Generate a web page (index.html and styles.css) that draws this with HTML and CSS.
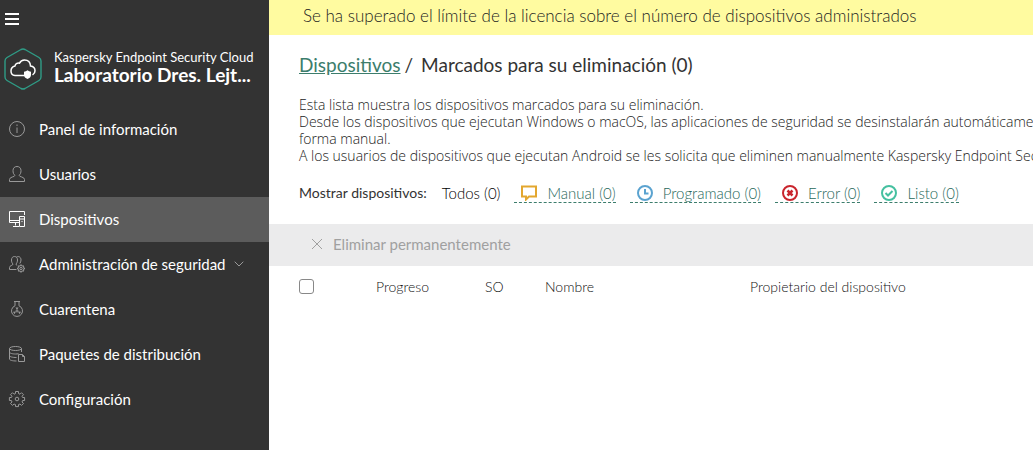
FILE: index.html
```html
<!doctype html>
<html lang="es">
<head>
    <meta charset="utf-8">
    <title>Dispositivos</title>
    <link rel="stylesheet" href="styles.css">
</head>
<body>

<div class="layout">
    <aside class="sidebar">
        <button class="toggle" type="button" aria-label="Menú">
            <svg width="14" height="12" viewBox="0 0 14 12"><path d="M0 1h14M0 6h14M0 11h14" stroke="#fff" stroke-width="2"/></svg>
        </button>

        <div class="brand">
            <svg width="38" height="42" viewBox="0 0 38 42" fill="none">
                <path d="M17 1.500q2-1 4 0l14 8q2 1.200 2 3.500v16q0 2.300-2 3.500l-14 8q-2 1-4 0l-14-8q-2-1.200-2-3.500V13q0-2.300 2-3.500z" stroke="#2f9c86" stroke-width="1.400"/>
                <path d="M21.500 27.500H11a4.500 4.500 0 0 1-4-4.500c0-3 1.800-4.500 4-5 .3-2 2-3.200 4.500-2.800 1-2.200 2.800-3.200 5-3.200 3.500 0 5.800 2.500 6 6 2.500.3 4.500 2 4.500 4.700 0 1.800-.8 3-2 3.800" stroke="#fff" stroke-width="1.500" stroke-linecap="round"/>
                <path d="M20 23.800q2-.3 3.500-1.600 1.500 1.300 3.500 1.600v3.200c0 2-1.500 3.200-3.500 4-2-.8-3.500-2-3.500-4z" fill="#fff"/>
            </svg>
            <div class="brand-text">
                <div class="product">Kaspersky Endpoint Security Cloud</div>
                <div class="company">Laboratorio Dres. Lejt...</div>
            </div>
        </div>

        <nav class="menu">
            <a href="#">
                <svg class="icon" viewBox="0 0 18 18"><circle cx="9" cy="9" r="7.500"/><path d="M9 7.500V13M9 4.500v1.500"/></svg>
                Panel de información
            </a>
            <a href="#">
                <svg class="icon" viewBox="0 0 18 18"><path d="M7 10.500C5.500 9.500 5 7.500 5 5.500c0-2.500 1.700-4 4-4s4 1.500 4 4c0 2-.5 4-2 5 0 1.500 5.500 1.200 5.500 4v2h-15v-2c0-2.800 5.500-2.500 5.500-4z"/></svg>
                Usuarios
            </a>
            <a class="active" href="#">
                <svg class="icon" viewBox="0 0 18 18"><path d="M16.500 5V1.500h-15v11H11M1.500 10.500H11M7.500 12.500v3M5 16.500h6M11.500 6.500h5v10h-5zM11.500 9h5M14 11v1"/></svg>
                Dispositivos
            </a>
            <a href="#">
                <svg class="icon" viewBox="0 0 18 18"><path d="M8.500 14.500h-7v-2c0-2.200 3.500-1.800 3.500-3.500C3.800 8 3.500 6.500 3.500 5c0-2 1-3.500 3-3.500S9.500 3 9.500 5c0 1.500-.5 3-1.500 4 0 .8.500 1.200 1.200 1.500M8.500 2c2.500-1.200 4.500.3 4.500 3 0 1.500-.5 2.500-1.200 3.500"/><circle cx="13" cy="13.500" r="1.200"/><circle cx="13" cy="13.500" r="3"/><path d="M13 9.500v1M13 16.500v1M9 13.500h1M16 13.500h1M10.200 10.700l.7.700M15.100 15.600l.7.700M15.800 10.700l-.7.700M10.900 15.600l-.7.700" stroke-width="1.500"/></svg>
                Administración de seguridad
                <svg class="chevron" width="10" height="6" viewBox="0 0 10 6"><path d="M.7.700L5 5 9.300.700"/></svg>
            </a>
            <a href="#">
                <svg class="icon" viewBox="0 0 18 18"><path d="M6 1.500h6M7 1.500v4.300a5.500 5.500 0 1 0 4 0V1.500"/><circle cx="9" cy="11" r="1"/><path d="M9 10L7.500 7.500h3zM8 11.500l-3 .3 1.500 2.500zM10 11.500l3 .3-1.500 2.500z" fill="#999" stroke="none"/></svg>
                Cuarentena
            </a>
            <a href="#">
                <svg class="icon" viewBox="0 0 18 18"><ellipse cx="7.500" cy="3.500" rx="6" ry="2"/><path d="M1.500 3.500V14c0 1.200 3 2 7 2M13.500 3.500V7M1.500 7c0 1.300 3 2 6 2 1 0 2 0 3-.3M1.500 10.500c0 1.300 3 2 7 2M10.500 9.500h4l2 2v5h-6zM14.500 9.500v2h2"/></svg>
                Paquetes de distribución
            </a>
            <a href="#">
                <svg class="icon" viewBox="0 0 18 18"><circle cx="9" cy="9" r="1.800"/><path d="M7.500 1.500h3v2l1.500.7 1.500-1.500 2 2L14 6.200l.6 1.300h2v3h-2L14 12l1.500 1.400-2 2L12 14l-1.500.6v2h-3v-2L6 14l-1.500 1.400-2-2L4 12l-.6-1.500h-2v-3h2L4 6.200 2.500 4.700l2-2L6 4.200l1.500-.7z"/></svg>
                Configuración
            </a>
        </nav>
    </aside>

    <main class="main">
        <div class="notice">Se ha superado el límite de la licencia sobre el número de dispositivos administrados</div>

        <div class="intro">
            <h1 class="title"><a href="#">Dispositivos</a><span class="slash">/</span>Marcados para su eliminación (0)</h1>

            <p class="description">
                Esta lista muestra los dispositivos marcados para su eliminación.<br>
                Desde los dispositivos que ejecutan Windows o macOS, las aplicaciones de seguridad se desinstalarán automáticamente<br>
                forma manual.<br>
                A los usuarios de dispositivos que ejecutan Android se les solicita que eliminen manualmente Kaspersky Endpoint Security
            </p>

            <div class="filters">
                <span class="filters-label">Mostrar dispositivos:</span>
                <span class="current">Todos (0)</span>
                <a class="filter" href="#">
                    <svg width="16" height="16" viewBox="0 0 16 16" fill="none" stroke="#e3a72f" stroke-width="2"><path d="M1 1.500h14v10H8l-3 3v-3H1z"/></svg>
                    Manual (0)
                </a>
                <a class="filter" href="#">
                    <svg width="16" height="16" viewBox="0 0 16 16" fill="none" stroke="#5ba3d0" stroke-width="2"><circle cx="8" cy="8" r="7"/><path d="M8 4v4.500h3.500"/></svg>
                    Programado (0)
                </a>
                <a class="filter" href="#">
                    <svg width="16" height="16" viewBox="0 0 16 16" fill="none" stroke="#c9252d" stroke-width="2"><circle cx="8" cy="8" r="7"/><path d="M5.500 5.500l5 5M10.500 5.500l-5 5" stroke-width="2.500"/></svg>
                    Error (0)
                </a>
                <a class="filter" href="#">
                    <svg width="16" height="16" viewBox="0 0 16 16" fill="none" stroke="#45c0a0" stroke-width="2"><circle cx="8" cy="8" r="7"/><path d="M4.500 8l2.500 2.500L11.500 6"/></svg>
                    Listo (0)
                </a>
            </div>
        </div>

        <div class="toolbar">
            <button type="button" disabled>
                <svg width="12" height="12" viewBox="0 0 12 12"><path d="M1 1l10 10M11 1L1 11" stroke="#a0a0a0"/></svg>
                Eliminar permanentemente
            </button>
        </div>

        <table class="devices">
            <thead>
                <tr>
                    <th class="col-check"><input type="checkbox" aria-label="Seleccionar todo"></th>
                    <th class="col-progress">Progreso</th>
                    <th class="col-os">SO</th>
                    <th class="col-name">Nombre</th>
                    <th>Propietario del dispositivo</th>
                </tr>
            </thead>
        </table>
    </main>
</div>

</body>
</html>
```
FILE: styles.css
```css
* {
    box-sizing: border-box;
}

body {
    margin: 0;
    font-family: Lato, "Open Sans", sans-serif;
    font-size: 14px;
    color: #333;
    background-color: #fff;
}

.layout {
    display: flex;
    min-height: 100vh;
}

.sidebar {
    flex: 0 0 269px;
    min-width: 0;
    color: #fff;
    background-color: #333;
}

.toggle {
    display: block;
    padding: 13px 5px;
    border: 0;
    background: none;
    cursor: pointer;
}

.toggle svg {
    display: block;
}

.brand {
    display: flex;
    align-items: center;
    gap: 12px;
    padding: 10px 8px 17px 4px;
}

.brand svg {
    flex: none;
}

.brand-text {
    min-width: 0;
    padding-bottom: 5px;
}

.product {
    font-size: 13px;
    line-height: 17px;
    white-space: nowrap;
}

.company {
    font-size: 19px;
    font-weight: bold;
    line-height: 18px;
    white-space: nowrap;
}

.menu a {
    display: flex;
    align-items: center;
    height: 45px;
    padding: 0 0 2px 8px;
    font-size: 15px;
    color: #fff;
    text-decoration: none;
}

.menu .active {
    background-color: #5c5c5c;
}

.icon {
    width: 18px;
    height: 18px;
    margin-right: 13px;
    fill: none;
    stroke: #999;
}

.active .icon {
    stroke: #fff;
}

.chevron {
    margin-left: 8px;
    fill: none;
    stroke: #999;
}

.main {
    flex: 1;
    min-width: 0;
    overflow: hidden;
}

.notice {
    padding: 4px 34px 7px;
    font-size: 17px;
    font-weight: 300;
    line-height: 24px;
    color: #222;
    background-color: #fffba0;
}

.intro {
    padding: 18px 0 21px 30px;
}

.title {
    margin: 0;
    font-size: 19px;
    font-weight: normal;
    line-height: 24px;
}

.title a {
    color: #3c7d6c;
}

.slash {
    margin: 0 8px 0 4px;
}

.description {
    margin: 19px 0;
    font-family: "Open Sans", Lato, sans-serif;
    font-weight: 300;
    line-height: 17px;
    color: #222;
    white-space: nowrap;
}

.filters {
    display: flex;
    align-items: center;
    line-height: 18px;
    white-space: nowrap;
}

.current {
    margin-left: 15px;
    font-size: 15px;
    font-weight: 300;
    color: #000;
}

.filter {
    display: flex;
    align-items: center;
    gap: 10px;
    margin-left: 14px;
    padding: 1px 0 0 7px;
    font-size: 15px;
    font-weight: 300;
    color: #27685a;
    text-decoration: none;
    border-bottom: 1px dashed #3c7d6c;
}

.toolbar {
    padding: 8px 42px 10px;
    background-color: #ebebec;
}

.toolbar button {
    display: flex;
    align-items: center;
    gap: 10px;
    padding: 0;
    border: 0;
    background: none;
    font: inherit;
    font-size: 15px;
    line-height: 24px;
    color: #a0a0a0;
}

.devices {
    width: 100%;
    table-layout: fixed;
    border-collapse: collapse;
}

.devices th {
    height: 40px;
    padding: 0;
    font-weight: 300;
    text-align: left;
    color: #111;
}

.devices .col-check {
    width: 107px;
    padding-left: 30px;
}

.col-progress {
    width: 109px;
}

.col-os {
    width: 60px;
}

.col-name {
    width: 205px;
}

.devices input {
    display: block;
    width: 15px;
    height: 15px;
    margin: 0;
    appearance: none;
    border: 1px solid #888;
    border-radius: 3px;
    background-color: #fff;
}
```
